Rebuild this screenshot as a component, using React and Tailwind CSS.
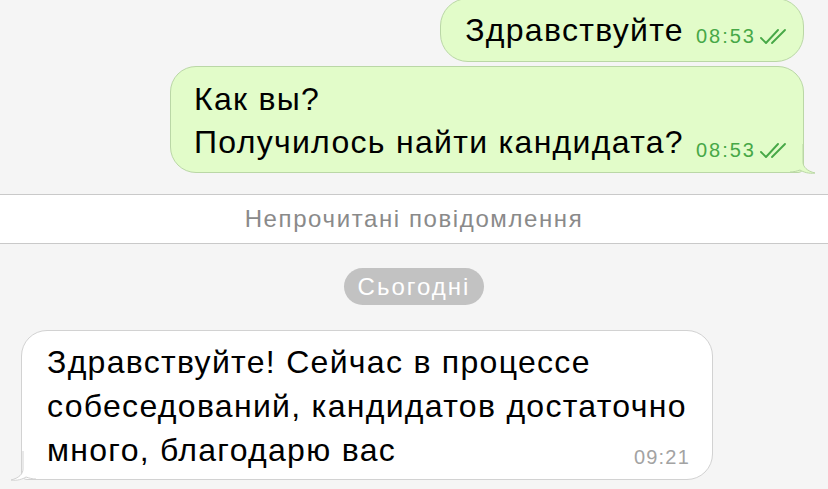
import React from 'react'

const FONT = { fontFamily: '"Liberation Sans", Arial, sans-serif' }

function Checks() {
  return (
    <svg width="32" height="17" viewBox="0 0 32 17" className="shrink-0">
      <path d="M2 10 L7 15 L19 2" fill="none" stroke="#47a847" strokeWidth="1.9" strokeLinecap="round" strokeLinejoin="round" />
      <path d="M13 15 L26 2" fill="none" stroke="#47a847" strokeWidth="1.9" strokeLinecap="round" />
    </svg>
  )
}

function OutTail() {
  return (
    <svg width="26" height="30" viewBox="0 0 26 30" className="absolute right-[-13px] bottom-[-2px]">
      <path d="M0 0 H13 V18 C13 23 17 27 25 29 C19 30 13 28 10 26 C7 27 4 28 0 28 Z" fill="#e2fcc9" />
      <path d="M13 0 V18 C13 23 17 27 25 29 C19 30 13 28 10 26 C7 27 4 28 0 28" fill="none" stroke="#bad7a6" strokeWidth="1" />
    </svg>
  )
}

function InTail() {
  return (
    <svg width="26" height="30" viewBox="0 0 26 30" className="absolute left-[-12px] bottom-[-2px]">
      <path d="M26 0 H13 V18 C13 23 9 27 1 29 C7 30 13 28 16 26 C19 27 22 28 26 28 Z" fill="#ffffff" />
      <path d="M13 0 V18 C13 23 9 27 1 29 C7 30 13 28 16 26 C19 27 22 28 26 28" fill="none" stroke="#d2d2d2" strokeWidth="1" />
    </svg>
  )
}

function Time({ children }) {
  return (
    <span className="text-[20px] leading-none tracking-[2px] text-[#47a847]">{children}</span>
  )
}

export default function App() {
  return (
    <div className="w-[828px] h-[489px] overflow-hidden bg-[#f5f5f5] text-black" style={FONT}>
      <div className="flex flex-col items-end pr-[24px] -mt-[2px]">
        <div className="relative h-[64px] rounded-[28px] border border-[#bad7a6] bg-[#e2fcc9] pl-[24px] pr-[12px] flex items-center">
          <span className="text-[32px] leading-[43px] tracking-[1.3px]">Здравствуйте</span>
          <span className="ml-[12px] mt-[12px] flex items-center gap-[3px]">
            <Time>08:53</Time>
            <Checks />
          </span>
        </div>

        <div className="relative mt-[4px] h-[107px] rounded-[26px] rounded-br-[6px] border border-[#bad7a6] bg-[#e2fcc9] pl-[23px] pr-[12px] pt-[11px]">
          <OutTail />
          <div className="relative text-[32px] leading-[43px] tracking-[1.3px]">Как вы?</div>
          <div className="relative flex items-end">
            <span className="text-[32px] leading-[43px] tracking-[1.3px]">Получилось найти кандидата?</span>
            <span className="ml-[12px] mb-[4px] flex items-center gap-[3px]">
              <Time>08:53</Time>
              <Checks />
            </span>
          </div>
        </div>
      </div>

      <div className="mt-[21px] h-[50px] border-y border-[#c9c9c9] bg-white flex items-center justify-center">
        <span className="text-[24px] text-[#8a8a8a] tracking-[1.6px]">Непрочитані повідомлення</span>
      </div>

      <div className="mt-[24px] flex justify-center">
        <span className="h-[37px] px-[14px] rounded-full bg-[#c2c2c2] text-white text-[24px] tracking-[2px] flex items-center">Сьогодні</span>
      </div>

      <div className="mt-[25px] pl-[21px]">
        <div className="relative w-[692px] h-[150px] rounded-[26px] rounded-bl-[6px] border border-[#d2d2d2] bg-white pl-[25px] pr-[22px] pt-[9px]">
          <InTail />
          <div className="relative text-[32px] leading-[44px] tracking-[1.3px]">Здравствуйте! Сейчас в процессе</div>
          <div className="relative text-[32px] leading-[44px] tracking-[1.3px]">собеседований, кандидатов достаточно</div>
          <div className="relative flex items-end justify-between">
            <span className="text-[32px] leading-[44px] tracking-[1.3px]">много, благодарю вас</span>
            <span className="mb-[5px] text-[20px] leading-none tracking-[1.2px] text-[#a3a3a3]">09:21</span>
          </div>
        </div>
      </div>
    </div>
  )
}
